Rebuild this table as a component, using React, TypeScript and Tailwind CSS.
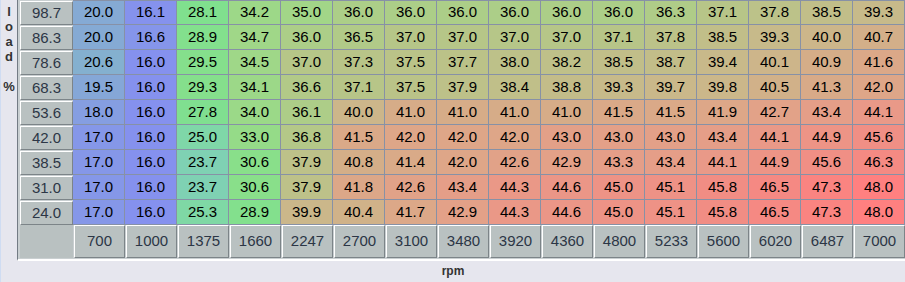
import React from 'react';

const loadAxis = [98.7, 86.3, 78.6, 68.3, 53.6, 42.0, 38.5, 31.0, 24.0];

const rpmAxis = [700, 1000, 1375, 1660, 2247, 2700, 3100, 3480, 3920, 4360, 4800, 5233, 5600, 6020, 6487, 7000];

const table: number[][] = [
  [20.0, 16.1, 28.1, 34.2, 35.0, 36.0, 36.0, 36.0, 36.0, 36.0, 36.0, 36.3, 37.1, 37.8, 38.5, 39.3],
  [20.0, 16.6, 28.9, 34.7, 36.0, 36.5, 37.0, 37.0, 37.0, 37.0, 37.1, 37.8, 38.5, 39.3, 40.0, 40.7],
  [20.6, 16.0, 29.5, 34.5, 37.0, 37.3, 37.5, 37.7, 38.0, 38.2, 38.5, 38.7, 39.4, 40.1, 40.9, 41.6],
  [19.5, 16.0, 29.3, 34.1, 36.6, 37.1, 37.5, 37.9, 38.4, 38.8, 39.3, 39.7, 39.8, 40.5, 41.3, 42.0],
  [18.0, 16.0, 27.8, 34.0, 36.1, 40.0, 41.0, 41.0, 41.0, 41.0, 41.5, 41.5, 41.9, 42.7, 43.4, 44.1],
  [17.0, 16.0, 25.0, 33.0, 36.8, 41.5, 42.0, 42.0, 42.0, 43.0, 43.0, 43.0, 43.4, 44.1, 44.9, 45.6],
  [17.0, 16.0, 23.7, 30.6, 37.9, 40.8, 41.4, 42.0, 42.6, 42.9, 43.3, 43.4, 44.1, 44.9, 45.6, 46.3],
  [17.0, 16.0, 23.7, 30.6, 37.9, 41.8, 42.6, 43.4, 44.3, 44.6, 45.0, 45.1, 45.8, 46.5, 47.3, 48.0],
  [17.0, 16.0, 25.3, 28.9, 39.9, 40.4, 41.7, 42.9, 44.3, 44.6, 45.0, 45.1, 45.8, 46.5, 47.3, 48.0],
];

// value -> heat colour stops (blue low, green mid, red high)
const stops: [number, number[]][] = [
  [16, [133, 145, 238]],
  [20, [133, 170, 212]],
  [24, [127, 212, 176]],
  [28, [128, 224, 142]],
  [32, [142, 222, 136]],
  [35, [162, 214, 136]],
  [37, [182, 198, 136]],
  [40, [204, 182, 138]],
  [41, [214, 172, 136]],
  [42, [222, 166, 136]],
  [44, [232, 154, 136]],
  [46, [242, 140, 132]],
  [48, [255, 128, 128]],
];

function heat(v: number) {
  if (v <= stops[0][0]) return `rgb(${stops[0][1].join(',')})`;
  for (let i = 1; i < stops.length; i++) {
    const [v1, c1] = stops[i];
    const [v0, c0] = stops[i - 1];
    if (v <= v1) {
      const t = (v - v0) / (v1 - v0);
      const c = c0.map((x, k) => Math.round(x + (c1[k] - x) * t));
      return `rgb(${c.join(',')})`;
    }
  }
  return `rgb(${stops[stops.length - 1][1].join(',')})`;
}

const label = ['l', 'o', 'a', 'd', '\u00a0', '%'];

export default function App() {
  return (
    <div className="w-[905px] h-[282px] overflow-hidden bg-[#e6e6ee] border-l border-[#cfdcf2] flex flex-col font-['Liberation_Sans',Arial,sans-serif]">
      <div className="flex h-[261px]">
        {/* vertical y-axis label */}
        <div className="w-[16px] pt-[4px] flex flex-col items-center text-[13px] leading-[15px] font-bold text-[#333]">
          {label.map((ch, i) => (
            <span key={i}>{ch}</span>
          ))}
        </div>

        {/* table panel */}
        <div className="flex-1 border-l border-[#737b84] border-b-2 border-b-white bg-[#c9cfd1] pl-[2px]">
          <div className="grid grid-cols-[53px_repeat(16,52px)]">
            {table.map((row, r) => (
              <React.Fragment key={r}>
                <div className="h-[25px] pt-[1px]">
                  <div className="h-[24px] border-t border-l border-white border-b border-r border-b-[#7c8488] border-r-[#7c8488] bg-[#b9c1c1] flex items-center justify-center text-[15px] text-[#2c3646]">
                    {loadAxis[r].toFixed(1)}
                  </div>
                </div>
                {row.map((v, c) => (
                  <div
                    key={c}
                    className={`h-[25px] border-b border-r border-[#8791a6] flex items-center justify-center text-[15px] text-black ${r === 0 ? 'border-t h-[25px]' : ''}`}
                    style={{ backgroundColor: heat(v) }}
                  >
                    {v.toFixed(1)}
                  </div>
                ))}
              </React.Fragment>
            ))}

            {/* rpm axis row */}
            <div className="h-[33px] bg-[#b9c1c1]"></div>
            {rpmAxis.map((rpm) => (
              <div
                key={rpm}
                className="h-[33px] pl-[1px] bg-[#c9cfd1]"
              >
                <div className="h-full border-t border-l border-white border-b border-r border-b-[#7c8488] border-r-[#7c8488] bg-[#b9c1c1] flex items-center justify-center text-[15px] text-[#2c3646]">
                  {rpm}
                </div>
              </div>
            ))}
          </div>
        </div>
      </div>

      <div className="flex-1 flex items-center justify-center text-[12px] font-bold text-[#333] pb-[1px]">
        rpm
      </div>
    </div>
  );
}
